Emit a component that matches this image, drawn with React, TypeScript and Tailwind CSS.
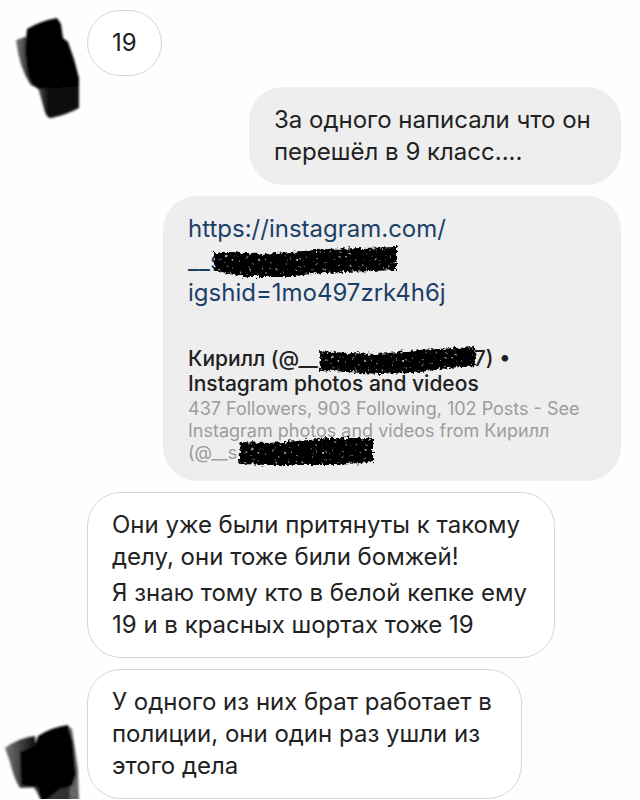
import type { ReactNode } from 'react'
import { clsx } from 'clsx'

interface BubbleProps {
  children: ReactNode
  own?: boolean
  className?: string
}

function Bubble({ children, own, className }: BubbleProps) {
  return (
    <div
      className={clsx(
        'rounded-[34px] border px-6 py-4',
        own ? 'border-[#eeeeee] bg-[#eeeeee]' : 'border-[#d6d6d6] bg-white',
        className,
      )}
    >
      {children}
    </div>
  )
}

interface MessageProps extends BubbleProps {
  avatar?: ReactNode
}

function Message({ own, avatar, children, className }: MessageProps) {
  return (
    <li className={clsx('flex', own && 'justify-end')}>
      {!own && <div className="relative w-[87px] shrink-0">{avatar}</div>}
      <Bubble own={own} className={className}>
        {children}
      </Bubble>
    </li>
  )
}

// rough marker stroke hiding a user name
function Scribble({ d, className }: { d: string; className: string }) {
  return (
    <svg className={clsx('absolute overflow-visible', className)} aria-hidden="true">
      <path d={d} filter="url(#marker)" />
    </svg>
  )
}

function Filters() {
  return (
    <svg className="absolute h-0 w-0" aria-hidden="true">
      <defs>
        <filter id="marker" x="-10%" y="-40%" width="120%" height="180%" colorInterpolationFilters="sRGB">
          <feTurbulence type="fractalNoise" baseFrequency="0.3" numOctaves="2" seed="4" result="noise" />
          <feDisplacementMap in="SourceGraphic" in2="noise" scale="7" xChannelSelector="R" yChannelSelector="G" result="rough" />
          <feColorMatrix in="noise" type="matrix" values="0 0 0 0 0  0 0 0 0 0  0 0 0 0 0  -5 0 0 0 4.3" result="grain" />
          <feComposite in="rough" in2="grain" operator="in" result="stroke" />
          <feGaussianBlur in="stroke" stdDeviation="0.7" />
        </filter>
        <filter id="soft" x="-20%" y="-20%" width="140%" height="140%">
          <feGaussianBlur stdDeviation="1.2" />
        </filter>
        <linearGradient id="fade" x1="0" y1="0" x2="1" y2="0">
          <stop offset="0" stopColor="#777" />
          <stop offset="0.7" stopColor="#222" />
          <stop offset="1" stopColor="#000" />
        </linearGradient>
        <linearGradient id="tail" x1="0" y1="0" x2="1" y2="0">
          <stop offset="0" stopColor="#555" />
          <stop offset="0.3" stopColor="#0a0a0a" />
          <stop offset="1" stopColor="#0a0a0a" />
        </linearGradient>
      </defs>
    </svg>
  )
}

function TopAvatar() {
  return (
    <svg className="absolute top-0 left-0" width="87" height="114" viewBox="0 0 87 114" aria-hidden="true">
      <g filter="url(#soft)">
        <path d="M16 30 L28 26 L38 78 L31 75 Q19 58 16 30Z" fill="url(#fade)" />
        <path d="M37 74 L79 72 L79 98 Q66 105 51 108 Q47 108 45 102Z" fill="url(#tail)" />
        <path d="M27 19 Q40 11 57 8 L61 14 L63 28 L68 32 Q75 50 79 68 L79 76 L38 79 Q29 72 27 58 L25 40Z" />
      </g>
    </svg>
  )
}

function BottomAvatar() {
  return (
    <svg className="absolute bottom-0 left-0" width="87" height="80" viewBox="0 0 87 80" aria-hidden="true">
      <g filter="url(#soft)">
        <path d="M5 29 Q18 19 35 17 L40 68 L20 69 Q14 60 10 43Z" fill="url(#fade)" />
        <path d="M33 67 L76 52 L79 84 L42 84 L37 73Z" fill="#303030" />
        <path d="M68 7 L72 10 L78 50 L79 84 L70 84Z" fill="#666" />
        <path d="M20 33 L35 27 L38 17 Q52 8 68 6 L73 24 L76 56 L72 67 L60 70 L42 84 L38 68 L21 66Z" />
      </g>
    </svg>
  )
}

function LinkMessage() {
  return (
    <a href="#profile" className="block">
      <span className="block text-[#1c3f68]">
        https://instagram.com/
        <span className="relative block">
          __s
          <Scribble
            className="top-0 left-6 h-8 w-[186px]"
            d="M1 7 L20 7 L48 9 L80 7 L115 4 L150 3 L185 2 L185 25 L160 26 L130 27 L100 29 L75 32 L32 32 L3 26Z"
          />
        </span>
        igshid=1mo497zrk4h6j
      </span>
      <span className="mt-[37px] block text-[21px] leading-[25px] font-medium text-[#202020]">
        Кирилл (@__
        <span className="relative inline-block w-[156px]">
          <Scribble
            className="-top-5 left-0 h-7 w-40"
            d="M1 5 L30 7 L60 8 L100 4 L157 1 L158 20 L130 22 L95 27 L60 28 L30 26 L2 24Z"
          />
        </span>
        7) •
        <br />
        Instagram photos and videos
      </span>
      <span className="mt-0.5 block text-[18px] leading-[22px] text-[#9c9c9c]">
        437 Followers, 903 Following, 102 Posts - See Instagram photos and videos from Кирилл
        <span className="relative block">
          (@__s
          <Scribble
            className="-top-1 left-[50px] h-7 w-[136px]"
            d="M2 4 L30 5 L60 3 L90 0 L135 0 L135 24 L100 27 L60 27 L30 27 L0 26Z"
          />
        </span>
      </span>
    </a>
  )
}

export default function App() {
  return (
    <main className="min-h-screen overflow-hidden bg-[#fefefe] font-['Inter','Liberation_Sans',sans-serif] text-[24px] leading-8 text-[#222222]">
      <Filters />
      <ul className="flex flex-col gap-[11px] pt-[10px] pr-[19px]">
        <Message avatar={<TopAvatar />}>19</Message>
        <Message own className="max-w-[372px]">
          За одного написали что он перешёл в 9 класс....
        </Message>
        <Message own className="max-w-[458px]">
          <LinkMessage />
        </Message>
        <Message className="max-w-[468px]">
          <p>Они уже были притянуты к такому делу, они тоже били бомжей!</p>
          <p className="mt-1">Я знаю тому кто в белой кепке ему 19 и в красных шортах тоже 19</p>
        </Message>
        <Message avatar={<BottomAvatar />} className="max-w-[435px]">
          У одного из них брат работает в полиции, они один раз ушли из этого дела
        </Message>
      </ul>
    </main>
  )
}
